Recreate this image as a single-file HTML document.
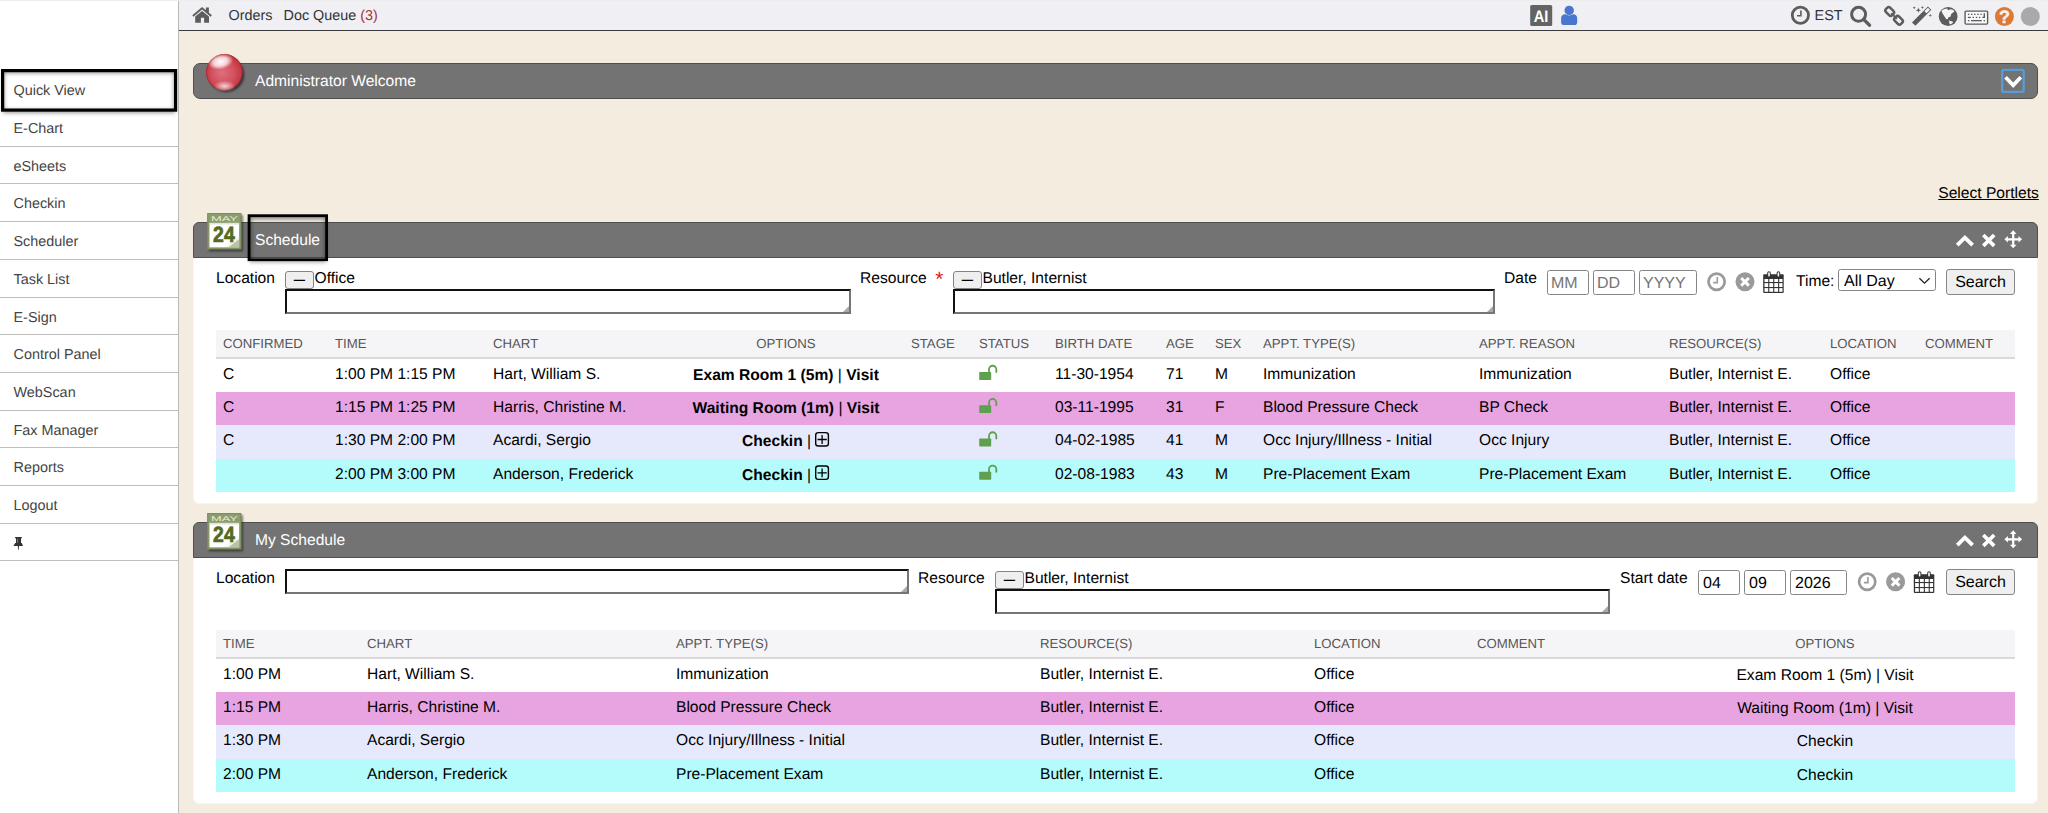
<!DOCTYPE html>
<html lang="en">
<head>
<meta charset="utf-8">
<title>Quick View</title>
<style>
*{box-sizing:border-box;margin:0;padding:0}
html,body{text-rendering:geometricPrecision;width:2048px;height:813px;overflow:hidden;background:#f4ecdf;font-family:"Liberation Sans",Arial,Helvetica,sans-serif;color:#000}
#app{position:relative;width:2048px;height:813px;overflow:hidden;background:#f4ecdf}
.abs{position:absolute;white-space:nowrap}
svg{display:block;position:absolute;overflow:visible}
/* sidebar */
#side{position:absolute;left:0;top:0;width:179px;height:813px;background:#fff;border-right:1px solid #b9b9b9}
#side ul{list-style:none}
#side li{position:absolute;left:0;width:178px;height:38px;border-bottom:1px solid #bdbdbd;font-size:14.4px;line-height:17px;color:#444;padding-left:13.5px}
#side li span{position:absolute;left:13.5px;top:11.5px}
#qv{position:absolute;left:3px;top:71px;width:172px;height:39px;box-shadow:inset 0 1px 4px 1px rgba(0,0,0,.45),0 3px 4px 0 rgba(0,0,0,.4);background:#fff}
/* topbar */
#top{position:absolute;left:179px;top:0;width:1869px;height:31px;background:#efeff4;border-bottom:1px solid #3a3a3a;font-size:14.4px;color:#333}
#top .t{position:absolute;top:8px;line-height:17px;white-space:nowrap}

/* main */
.bar{position:absolute;left:193px;width:1845px;background:#737373;border:1px solid #4f4f4f;color:#fff;font-size:15.6px}
.bar .ttl{position:absolute;left:61px;line-height:18px;white-space:nowrap}
#adm{top:63px;height:36px;border-radius:7px}
.phead{height:36px;border-radius:6px 6px 0 0}
.pbody{position:absolute;left:193px;width:1845px;height:246px;background:#fff;border-radius:0 0 7px 7px;box-shadow:inset 1px 0 0 #f7f6f3,inset -1px 0 0 #f7f6f3,inset 0 -1px 0 #f7f6f3}
.lbl{position:absolute;margin-top:1px;font-size:15.6px;line-height:18px;white-space:nowrap;color:#000}
.ta{position:absolute;height:25px;background:#fff;border:2px solid;border-color:#111 #767676 #767676 #111}
.ta:after{content:"";position:absolute;right:0;bottom:0;width:0;height:0;border-style:solid;border-width:0 0 6px 6px;border-color:transparent transparent #aaa transparent}
.btn{position:absolute;background:#efefef;border:1px solid #858585;border-radius:3px;font-size:16px;line-height:18px;text-align:center;color:#000}
.inp{position:absolute;height:25px;background:#fff;border:1px solid #858585;border-radius:2.5px;font-size:16px;line-height:18px;padding:4px 0 0 4px;color:#000}
.inp.ph{color:#757575;padding-left:3px}
table.g{position:absolute;left:216px;width:1799px;border-collapse:separate;border-spacing:0;table-layout:fixed;font-size:15.6px}
table.g th{height:29px;background:#f5f5f8;border-bottom:2px solid #d9d9d9;font-weight:normal;font-size:13.2px;color:#555;text-align:left;padding:0 0 0 7px;line-height:16px;white-space:nowrap;vertical-align:middle}
table.g td{padding:0 0 0 7px;line-height:18px;white-space:nowrap;vertical-align:top;overflow:visible}
table.g td>span{position:relative;top:7px;display:inline-block}
table.g th.c{text-align:center;padding:0}
table.g td.c{text-align:center;padding:0}
table.g td.c>span{top:8px}
tr.r1 td{height:33px;background:#fff}
tr.r2 td{height:33px;background:#e8a4e0}
tr.r3 td{height:34px;background:#e6e9fb}
tr.r4 td{height:33px;background:#b4fbfc}
b{font-weight:bold}
i.plus{display:inline-block;width:14.6px;height:10px}
.dash{position:absolute;left:0;right:0;top:-1.5px;font-size:11.3px;line-height:18px;text-align:center;transform:translateY(0.1px) scaleY(1.6)}
#sf{position:absolute;left:249.5px;top:216px;width:76.5px;height:43px;box-shadow:inset 0 2px 4px 1px rgba(0,0,0,.45),0 3px 4px 0 rgba(0,0,0,.4)}
</style>
</head>
<body>
<div id="app">

<div id="side">
  <div id="qv"></div>
  <ul>
    <li style="top:72px;height:37px;border-bottom-color:transparent"><span style="top:10.5px">Quick View</span></li>
    <li style="top:109px;height:38px"><span>E-Chart</span></li>
    <li style="top:147px;height:37px"><span>eSheets</span></li>
    <li style="top:184px;height:38px"><span>Checkin</span></li>
    <li style="top:222px;height:38px"><span>Scheduler</span></li>
    <li style="top:260px;height:38px"><span>Task List</span></li>
    <li style="top:298px;height:37px"><span>E-Sign</span></li>
    <li style="top:335px;height:38px"><span>Control Panel</span></li>
    <li style="top:373px;height:38px"><span>WebScan</span></li>
    <li style="top:411px;height:37px"><span>Fax Manager</span></li>
    <li style="top:448px;height:38px"><span>Reports</span></li>
    <li style="top:486px;height:38px"><span>Logout</span></li>
    <li style="top:524px;height:37px"></li>
  </ul>
</div>

<div id="top">
  <span class="t" style="left:49.5px">Orders</span>
  <span class="t" style="left:104.5px">Doc Queue <span style="color:#a33">(3)</span></span>
  <span class="t" style="left:1635.6px">EST</span>
</div>


<div class="bar" id="adm"><span class="ttl" style="top:9px">Administrator Welcome</span></div>
<a class="lbl" style="left:1938.3px;top:183.5px;text-decoration:underline">Select Portlets</a>

<!-- Schedule portlet -->
<div class="pbody" style="top:258px">
</div>
<div class="bar phead" style="top:222px"><span class="ttl" style="top:9px">Schedule</span></div>
<div id="sf"></div>
<span class="lbl" style="left:216px;top:269px">Location</span>
<div class="btn" style="left:285px;top:271px;width:29px;height:18px"><span class="dash">—</span></div>
<span class="lbl" style="left:314.5px;top:269px">Office</span>
<div class="ta" style="left:285px;top:289px;width:566px"></div>
<span class="lbl" style="left:860px;top:269px">Resource</span>
<span class="lbl" style="left:935.2px;top:268px;color:#e0201c;font-size:20.8px;line-height:22px">*</span>
<div class="btn" style="left:953px;top:271px;width:29px;height:18px"><span class="dash">—</span></div>
<span class="lbl" style="left:982.5px;top:269px">Butler, Internist</span>
<div class="ta" style="left:953px;top:289px;width:542px"></div>
<span class="lbl" style="left:1504px;top:269px">Date</span>
<div class="inp ph" style="left:1547px;top:270px;width:42px">MM</div>
<div class="inp ph" style="left:1593px;top:270px;width:42px">DD</div>
<div class="inp ph" style="left:1639px;top:270px;width:58px">YYYY</div>
<span class="lbl" style="left:1796px;top:271.5px">Time:</span>
<div class="inp" style="left:1838px;top:269px;width:98px;height:22px;padding:2.5px 0 0 5px">All Day</div>
<div class="btn" style="left:1946px;top:269px;width:69px;height:26px;padding-top:4px">Search</div>

<table class="g" style="top:330px">
<colgroup><col style="width:112px"><col style="width:158px"><col style="width:182px"><col style="width:236px"><col style="width:68px"><col style="width:76px"><col style="width:111px"><col style="width:49px"><col style="width:48px"><col style="width:216px"><col style="width:190px"><col style="width:161px"><col style="width:95px"><col style="width:97px"></colgroup>
<thead><tr><th>CONFIRMED</th><th>TIME</th><th>CHART</th><th class="c">OPTIONS</th><th>STAGE</th><th>STATUS</th><th>BIRTH DATE</th><th>AGE</th><th>SEX</th><th>APPT. TYPE(S)</th><th>APPT. REASON</th><th>RESOURCE(S)</th><th>LOCATION</th><th>COMMENT</th></tr></thead>
<tbody>
<tr class="r1"><td><span>C</span></td><td><span>1:00 PM 1:15 PM</span></td><td><span>Hart, William S.</span></td><td class="c"><span><b>Exam Room 1 (5m)</b> | <b>Visit</b></span></td><td></td><td></td><td><span>11-30-1954</span></td><td><span>71</span></td><td><span>M</span></td><td><span>Immunization</span></td><td><span>Immunization</span></td><td><span>Butler, Internist E.</span></td><td><span>Office</span></td><td></td></tr>
<tr class="r2"><td><span>C</span></td><td><span>1:15 PM 1:25 PM</span></td><td><span>Harris, Christine M.</span></td><td class="c"><span><b>Waiting Room (1m)</b> | <b>Visit</b></span></td><td></td><td></td><td><span>03-11-1995</span></td><td><span>31</span></td><td><span>F</span></td><td><span>Blood Pressure Check</span></td><td><span>BP Check</span></td><td><span>Butler, Internist E.</span></td><td><span>Office</span></td><td></td></tr>
<tr class="r3"><td><span>C</span></td><td><span>1:30 PM 2:00 PM</span></td><td><span>Acardi, Sergio</span></td><td class="c"><span><b>Checkin</b> | <i class="plus">&nbsp;</i></span></td><td></td><td></td><td><span>04-02-1985</span></td><td><span>41</span></td><td><span>M</span></td><td><span>Occ Injury/Illness - Initial</span></td><td><span>Occ Injury</span></td><td><span>Butler, Internist E.</span></td><td><span>Office</span></td><td></td></tr>
<tr class="r4"><td></td><td><span>2:00 PM 3:00 PM</span></td><td><span>Anderson, Frederick</span></td><td class="c"><span><b>Checkin</b> | <i class="plus">&nbsp;</i></span></td><td></td><td></td><td><span>02-08-1983</span></td><td><span>43</span></td><td><span>M</span></td><td><span>Pre-Placement Exam</span></td><td><span>Pre-Placement Exam</span></td><td><span>Butler, Internist E.</span></td><td><span>Office</span></td><td></td></tr>
</tbody></table>

<!-- My Schedule portlet -->
<div class="pbody" style="top:558px">
</div>
<div class="bar phead" style="top:522px"><span class="ttl" style="top:9px">My Schedule</span></div>
<span class="lbl" style="left:216px;top:569px">Location</span>
<div class="ta" style="left:285px;top:569px;width:624px"></div>
<span class="lbl" style="left:918px;top:569px">Resource</span>
<div class="btn" style="left:995px;top:571px;width:29px;height:18px"><span class="dash">—</span></div>
<span class="lbl" style="left:1024.5px;top:569px">Butler, Internist</span>
<div class="ta" style="left:995px;top:589px;width:615px"></div>
<span class="lbl" style="left:1620px;top:569px">Start date</span>
<div class="inp" style="left:1698px;top:570px;width:42px">04</div>
<div class="inp" style="left:1744px;top:570px;width:42px">09</div>
<div class="inp" style="left:1790px;top:570px;width:57px">2026</div>
<div class="btn" style="left:1946px;top:569px;width:69px;height:26px;padding-top:4px">Search</div>

<table class="g" style="top:630px">
<colgroup><col style="width:144px"><col style="width:309px"><col style="width:364px"><col style="width:274px"><col style="width:163px"><col style="width:165px"><col style="width:380px"></colgroup>
<thead><tr><th>TIME</th><th>CHART</th><th>APPT. TYPE(S)</th><th>RESOURCE(S)</th><th>LOCATION</th><th>COMMENT</th><th class="c">OPTIONS</th></tr></thead>
<tbody>
<tr class="r1"><td><span>1:00 PM</span></td><td><span>Hart, William S.</span></td><td><span>Immunization</span></td><td><span>Butler, Internist E.</span></td><td><span>Office</span></td><td></td><td class="c"><span>Exam Room 1 (5m) | Visit</span></td></tr>
<tr class="r2"><td><span>1:15 PM</span></td><td><span>Harris, Christine M.</span></td><td><span>Blood Pressure Check</span></td><td><span>Butler, Internist E.</span></td><td><span>Office</span></td><td></td><td class="c"><span>Waiting Room (1m) | Visit</span></td></tr>
<tr class="r3"><td><span>1:30 PM</span></td><td><span>Acardi, Sergio</span></td><td><span>Occ Injury/Illness - Initial</span></td><td><span>Butler, Internist E.</span></td><td><span>Office</span></td><td></td><td class="c"><span>Checkin</span></td></tr>
<tr class="r4"><td><span>2:00 PM</span></td><td><span>Anderson, Frederick</span></td><td><span>Pre-Placement Exam</span></td><td><span>Butler, Internist E.</span></td><td><span>Office</span></td><td></td><td class="c"><span>Checkin</span></td></tr>
</tbody></table>

<svg id="ico" width="2048" height="813" viewBox="0 0 2048 813" style="position:absolute;left:0;top:0;pointer-events:none">
<defs>
<radialGradient id="ballg" cx="0.5" cy="0.55" r="0.6" fx="0.42" fy="0.5">
<stop offset="0" stop-color="#de707c"/><stop offset="0.5" stop-color="#d35360"/><stop offset="0.85" stop-color="#c4343f"/><stop offset="1" stop-color="#ab222c"/>
</radialGradient>
<radialGradient id="ballh" cx="0.5" cy="0.5" r="0.5">
<stop offset="0" stop-color="#fff" stop-opacity="1"/><stop offset="0.55" stop-color="#fff" stop-opacity="0.75"/><stop offset="1" stop-color="#fff" stop-opacity="0"/>
</radialGradient>
<radialGradient id="ballb" cx="0.5" cy="0.5" r="0.5">
<stop offset="0" stop-color="#fff" stop-opacity="0.75"/><stop offset="1" stop-color="#fff" stop-opacity="0"/>
</radialGradient>
<filter id="bsh" x="-30%" y="-30%" width="170%" height="170%"><feGaussianBlur stdDeviation="1.3"/></filter>
<filter id="csh" x="-30%" y="-30%" width="170%" height="170%"><feGaussianBlur stdDeviation="1.1"/></filter>
<linearGradient id="calpg" x1="0" y1="0" x2="1" y2="1"><stop offset="0" stop-color="#fff"/><stop offset="0.7" stop-color="#fff"/><stop offset="1" stop-color="#e4e6dc"/></linearGradient>
<g id="calico">
  <rect x="1.6" y="2" width="34" height="36.2" fill="#000" opacity="0.5" filter="url(#csh)"/>
  <rect x="0" y="0" width="34" height="36.2" fill="#8c9d6e"/>
  <rect x="0.5" y="0.5" width="33" height="35.2" fill="none" stroke="#7a8c58" stroke-width="1"/>
  <rect x="2.2" y="9.8" width="29.6" height="24.4" fill="url(#calpg)"/>
  <rect x="2.2" y="9.8" width="29.6" height="1.6" fill="#d9dbd0" opacity="0.8"/>
  <polygon points="31.8,26 31.8,34.2 21,34.2" fill="#b9c4a2"/>
  <polygon points="21,34.2 23.2,28 31.8,26" fill="#eef0e8"/>
  <text x="17.1" y="7.7" font-family="'Liberation Sans',Arial,sans-serif" font-size="6.8" fill="#f4f6ee" fill-opacity="0.92" text-anchor="middle" textLength="27" lengthAdjust="spacingAndGlyphs">MAY</text>
  <text x="16.6" y="28.7" font-family="'Liberation Sans',Arial,sans-serif" font-size="22.2" font-weight="bold" fill="#566a20" stroke="#566a20" stroke-width="0.7" text-anchor="middle" textLength="21.6" lengthAdjust="spacingAndGlyphs">24</text>
</g>
<g id="hdrico" fill="#fff">
  <path d="M1964.9,234.9 L1955.9,243.8 L1958.6,246.5 L1964.9,240.3 L1971.2,246.5 L1973.95,243.8 Z"/>
  <path d="M1984.6,233.7 L1988.75,237.85 L1992.9,233.7 L1995.5,236.3 L1991.35,240.45 L1995.5,244.6 L1992.9,247.2 L1988.75,243.05 L1984.6,247.2 L1982,244.6 L1986.15,240.45 L1982,236.3 Z"/>
  <path d="M2013.2,230.3 L2016.5,233.9 L2014.3,233.9 L2014.3,238.2 L2018.5,238.2 L2018.5,236 L2022.1,239.3 L2018.5,242.6 L2018.5,240.4 L2014.3,240.4 L2014.3,244.7 L2016.5,244.7 L2013.2,248.3 L2009.9,244.7 L2012.1,244.7 L2012.1,240.4 L2007.9,240.4 L2007.9,242.6 L2004.4,239.3 L2007.9,236 L2007.9,238.2 L2012.1,238.2 L2012.1,233.9 L2009.9,233.9 Z"/>
</g>
<g id="dateico">
  <circle cx="1716.6" cy="281.8" r="8.1" fill="none" stroke="#9a9a9a" stroke-width="2.7"/>
  <path d="M1717.3,277.1 V282.6 H1713.3" fill="none" stroke="#9a9a9a" stroke-width="1.6"/>
  <circle cx="1745" cy="281.8" r="9.5" fill="#9a9a9a"/>
  <path d="M1741.2,278 L1748.8,285.6 M1748.8,278 L1741.2,285.6" stroke="#fff" stroke-width="3" fill="none"/>
  <g fill="#333">
    <path d="M1764.3,274.2 H1782.6 Q1783.7,274.2 1783.7,275.3 V291.9 Q1783.7,293 1782.6,293 H1764.3 Q1763.2,293 1763.2,291.9 V275.3 Q1763.2,274.2 1764.3,274.2 Z"/>
    <rect x="1767.2" y="271.2" width="3.6" height="6.2" rx="1.8"/>
    <rect x="1776.6" y="271.2" width="3.6" height="6.2" rx="1.8"/>
  </g>
  <g fill="#fff">
    <rect x="1768.2" y="272.3" width="1.6" height="4.2" rx="0.8"/>
    <rect x="1777.6" y="272.3" width="1.6" height="4.2" rx="0.8"/>
    <rect x="1764.5" y="279" width="3.7" height="3"/><rect x="1769.3" y="279" width="3.9" height="3"/><rect x="1774.3" y="279" width="3.8" height="3"/><rect x="1779.2" y="279" width="3.3" height="3"/>
    <rect x="1764.5" y="283.1" width="3.7" height="3.9"/><rect x="1769.3" y="283.1" width="3.9" height="3.9"/><rect x="1774.3" y="283.1" width="3.8" height="3.9"/><rect x="1779.2" y="283.1" width="3.3" height="3.9"/>
    <rect x="1764.5" y="288.1" width="3.7" height="3.7"/><rect x="1769.3" y="288.1" width="3.9" height="3.7"/><rect x="1774.3" y="288.1" width="3.8" height="3.7"/><rect x="1779.2" y="288.1" width="3.3" height="3.7"/>
  </g>
</g>
<g id="lock">
  <rect x="979.2" y="372" width="12" height="7.9" rx="0.7" fill="#5fa04e"/>
  <path d="M989,372.3 V369.4 A3.65,3.65 0 0 1 996.3,369.4 V372" fill="none" stroke="#5fa04e" stroke-width="1.8" stroke-linecap="round"/>
</g>
<g id="plus" fill="none" stroke="#000">
  <rect x="815.7" y="432.6" width="12.7" height="13.4" rx="2.6" stroke-width="1.4"/>
  <path d="M817.5,439.5 H826.8 M822.1,435.1 V443.9" stroke-width="1.3"/>
</g>
</defs>
<!-- top bar icons -->
<g fill="#5c5c5c">
  <path d="M192.3,15.2 L202.1,7 L205.9,10.2 V7.4 H208.9 V12.7 L211.9,15.2 L210.7,16.7 L202.1,9.5 L193.5,16.7 Z"/>
  <path d="M195.2,16.6 L202.1,10.9 L209,16.6 V22.8 H204.1 V17.8 H200.9 V22.8 H195.2 Z"/>
</g>
<rect x="1530.2" y="4.9" width="22" height="21.1" rx="1.6" fill="#626463"/>
<text x="1541.1" y="21.6" font-family="'Liberation Sans',Arial,sans-serif" font-size="16.6" font-weight="bold" fill="#fff" text-anchor="middle" textLength="14.6" lengthAdjust="spacingAndGlyphs">AI</text>
<g fill="#4a76cf">
  <circle cx="1569.2" cy="10.4" r="4.7"/>
  <path d="M1561.1,18.6 Q1561.1,14.4 1565.2,14.3 Q1569.2,16.6 1573.2,14.3 Q1577.2,14.4 1577.2,18.6 V22.2 Q1577.2,25 1574.4,25 H1563.9 Q1561.1,25 1561.1,22.2 Z"/>
</g>
<g fill="none" stroke="#5c5c5c">
  <circle cx="1800.4" cy="15.25" r="8.1" stroke-width="2.8"/>
  <path d="M1800.9,10.4 V15.8 H1797" stroke-width="1.6"/>
  <circle cx="1858.6" cy="14.35" r="7" stroke-width="3"/>
  <path d="M1863.6,19.4 L1869.6,25.2" stroke-width="3.3" stroke-linecap="round"/>
  <g stroke-width="2.5">
    <rect x="-4.4" y="-3.05" width="8.8" height="6.1" rx="2.3" transform="translate(1889.7,11.5) rotate(45)"/>
    <rect x="-4.4" y="-3.05" width="8.8" height="6.1" rx="2.3" transform="translate(1898.5,20.3) rotate(45)"/>
  </g>
  <path d="M1891.6,13.7 L1896.5,18.4" stroke-width="1.6" stroke-linecap="round"/>
</g>
<g fill="#5c5c5c">
  <path d="M1912,22.4 L1927.9,6.4 L1931.3,9.8 L1915.4,25.8 Z"/>
  <path d="M1924.4,11.2 L1927.9,7.7 L1930,9.8 L1926.5,13.3 Z" fill="#f4f4f8"/>
  <path d="M1918.4,7.6 l0.7,1.9 l1.9,0.7 l-1.9,0.7 l-0.7,1.9 l-0.7,-1.9 l-1.9,-0.7 l1.9,-0.7 Z"/>
  <path d="M1914.2,6.2 l0.45,1.1 l1.1,0.45 l-1.1,0.45 l-0.45,1.1 l-0.45,-1.1 l-1.1,-0.45 l1.1,-0.45 Z"/>
  <path d="M1922.4,5.9 l0.45,1.1 l1.1,0.45 l-1.1,0.45 l-0.45,1.1 l-0.45,-1.1 l-1.1,-0.45 l1.1,-0.45 Z"/>
  <path d="M1930.3,13.9 l0.45,1.1 l1.1,0.45 l-1.1,0.45 l-0.45,1.1 l-0.45,-1.1 l-1.1,-0.45 l1.1,-0.45 Z"/>
  <circle cx="1948.15" cy="16.5" r="9.4"/>
  <path d="M1941.5,10.6 Q1944.5,8.6 1947.2,8.6 L1948,10.2 L1950.4,9.2 L1953.4,10 L1954.4,11.6 L1951.2,14 L1950.6,16.6 L1948.2,17.4 L1947.8,19.2 L1946.2,19 L1945,17.2 L1943.2,14.6 L1942.2,12.8 Z" fill="#f4f4f8"/>
  <path d="M1949,20.6 L1952.4,21.4 L1953.2,22.6 L1950.4,24.4 L1949.4,23.4 Z" fill="#f4f4f8"/>
</g>
<rect x="1965.1" y="11.1" width="22.5" height="13" rx="1" fill="#f9f9fb" stroke="#5c5c5c" stroke-width="1.4"/>
<g fill="#5c5c5c">
  <rect x="1967.9" y="13.7" width="1.4" height="1.3"/><rect x="1971" y="13.7" width="1.4" height="1.3"/><rect x="1974.1" y="13.7" width="1.4" height="1.3"/><rect x="1977.3" y="13.7" width="1.4" height="1.3"/><rect x="1980.4" y="13.7" width="1.4" height="1.3"/>
  <path d="M1983.6,13.2 H1985 V18 H1982.4 V16.8 H1983.6 Z"/>
  <rect x="1967.9" y="16.8" width="3" height="1.3"/><rect x="1972.6" y="16.8" width="1.4" height="1.3"/><rect x="1975.8" y="16.8" width="1.4" height="1.3"/><rect x="1978.9" y="16.8" width="1.4" height="1.3"/>
  <rect x="1967.9" y="20" width="1.4" height="1.3"/><rect x="1971" y="20" width="10.8" height="1.3"/><rect x="1983.6" y="20" width="1.4" height="1.3"/>
</g>
<circle cx="2004.4" cy="16.5" r="9.5" fill="#dc7a35"/>
<text x="2004.5" y="23" font-family="'Liberation Sans',Arial,sans-serif" font-size="18" font-weight="bold" fill="#f6f1ee" stroke="#f6f1ee" stroke-width="0.4" text-anchor="middle">?</text>
<circle cx="2030.3" cy="16.5" r="9.5" fill="#a9a9a9"/>
<!-- focus outlines -->
<rect x="2.6" y="70.6" width="173" height="39.5" fill="none" stroke="#000" stroke-width="3.2"/>
<rect x="249.05" y="215.7" width="77.55" height="44" fill="none" stroke="#000" stroke-width="2.8"/>
<!-- pin -->
<g fill="#333">
  <rect x="14.9" y="537" width="7" height="1.3" rx="0.5"/>
  <rect x="16" y="538" width="5" height="5.2"/>
  <path d="M15.2,543 H21.8 L23,545.9 H13.4 Z"/>
  <path d="M17.8,545.9 H19 L18.6,550 H18.2 Z"/>
</g>
<rect x="17.2" y="538.6" width="0.9" height="4" fill="#9a8a6a"/>
<!-- red ball -->
<ellipse cx="226.3" cy="74.6" rx="18" ry="17.6" fill="#000" opacity="0.55" filter="url(#bsh)"/>
<circle cx="224.3" cy="72.2" r="18.2" fill="url(#ballg)"/>
<circle cx="224.3" cy="72.2" r="17.8" fill="none" stroke="#a8202a" stroke-width="0.9" opacity="0.8"/>
<ellipse cx="220.6" cy="61.6" rx="13" ry="7.8" fill="url(#ballh)" transform="rotate(-12 220.6 61.6)"/>
<ellipse cx="224.6" cy="86.2" rx="11" ry="5.6" fill="url(#ballb)"/>
<!-- admin chevron -->
<rect x="2002.1" y="69.8" width="21.6" height="22" rx="1.6" fill="none" stroke="#5b9ad8" stroke-width="2.3"/>
<path d="M2006.9,76 L2004.2,78.6 L2013.2,88.1 L2022.1,78.6 L2019.5,76 L2013.2,82.5 Z" fill="#fff"/>
<!-- calendar icons -->
<use href="#calico" x="207.3" y="213.1"/>
<use href="#calico" x="207.3" y="513.1"/>
<!-- portlet header icons -->
<use href="#hdrico"/>
<use href="#hdrico" y="300"/>
<!-- date icons -->
<use href="#dateico"/>
<use href="#dateico" x="150.6" y="300"/>
<!-- select chevron -->
<path d="M1919.4,278.3 L1924.5,283.2 L1929.6,278.3" fill="none" stroke="#222" stroke-width="1.3"/>
<!-- locks -->
<use href="#lock"/><use href="#lock" y="33.2"/><use href="#lock" y="66.5"/><use href="#lock" y="99.8"/>
<!-- plus -->
<use href="#plus"/><use href="#plus" y="33.4"/>
</svg>


<div style="position:absolute;left:0;top:0;width:2048px;height:1px;background:#ececec"></div>
</div>
</body>
</html>
